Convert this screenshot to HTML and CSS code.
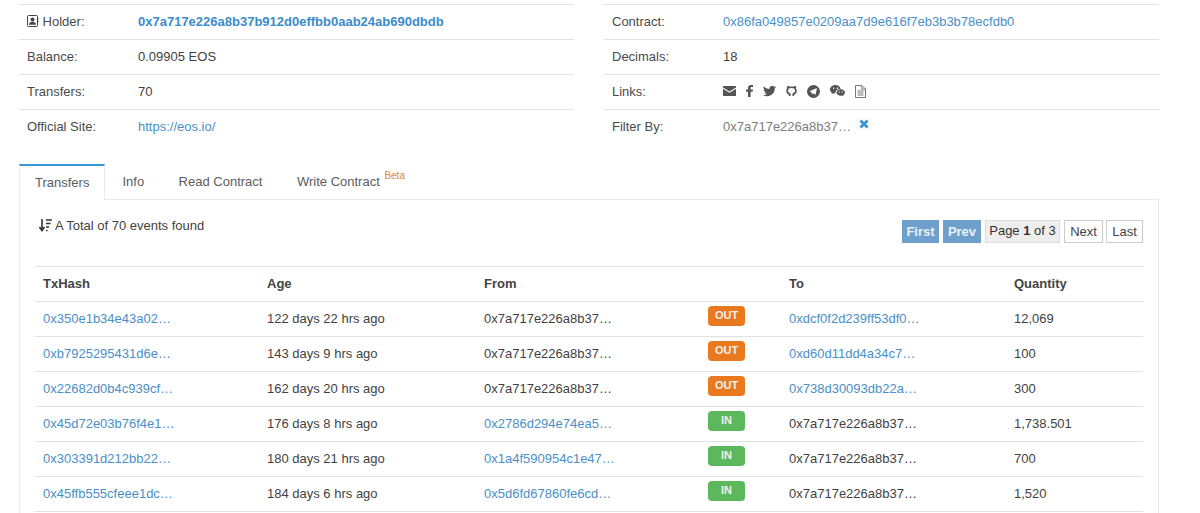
FILE: index.html
```html
<!DOCTYPE html>
<html lang="en">
<head>
<meta charset="utf-8">
<title>Token holder</title>
<link rel="stylesheet" href="styles.css">
</head>
<body>
<section class="summary">
  <div class="col">
    <div class="row"><div class="label"><svg class="ico-holder" viewBox="0 0 12 12"><rect x="0.5" y="0.5" width="10" height="11" rx="1" fill="none" stroke="#444" stroke-width="1"/><circle cx="5.5" cy="4.4" r="2" fill="#444"/><path d="M2 9.8c0-2.2 1.4-3 3.5-3s3.500.8 3.500 3z" fill="#444"/><path d="M11 3v1.500M11 6v1.500" stroke="#444"/></svg> Holder:</div><div class="value"><a class="strong" href="#">0x7a717e226a8b37b912d0effbb0aab24ab690dbdb</a></div></div>
    <div class="row"><div class="label">Balance:</div><div class="value">0.09905 EOS</div></div>
    <div class="row"><div class="label">Transfers:</div><div class="value">70</div></div>
    <div class="row"><div class="label">Official Site:</div><div class="value"><a href="#">https://eos.io/</a></div></div>
  </div>
  <div class="col">
    <div class="row"><div class="label">Contract:</div><div class="value"><a href="#">0x86fa049857e0209aa7d9e616f7eb3b3b78ecfdb0</a></div></div>
    <div class="row"><div class="label">Decimals:</div><div class="value">18</div></div>
    <div class="row"><div class="label">Links:</div><div class="value links">
      <svg class="lnk w13" viewBox="0 0 14 11"><path d="M0 0h14v1.800L7 6 0 1.800z"/><path d="M0 3.200l7 4.200 7-4.200V11H0z"/></svg>
      <svg class="lnk w7" viewBox="0 0 7 12"><path d="M2 12V6.700H0V4.500h2V3C2 1 3.200 0 5 0h2v2.100H5.700c-.9 0-1.100.4-1.100 1.100v1.300H7l-.4 2.200h-2V12z"/></svg>
      <svg class="lnk w13" viewBox="0 0 14 12"><path d="M14 1.600c-.5.300-1 .4-1.600.5.600-.4 1-.9 1.200-1.500-.5.300-1.100.5-1.800.7A2.900 2.900 0 0 0 6.900 3.800C4.500 3.700 2.400 2.600 1 .8.200 2.100.6 3.700 1.900 4.600c-.5 0-.9-.1-1.300-.4 0 1.400 1 2.600 2.300 2.900-.4.100-.9.100-1.300 0 .4 1.200 1.400 2 2.700 2A5.800 5.800 0 0 1 0 10.300 8.200 8.200 0 0 0 12.600 3.400c.6-.5 1-1.100 1.400-1.800z"/></svg>
      <svg class="lnk w11" viewBox="0 0 12 12"><path d="M4 11.500V9.200C2.200 8.900 1.200 7.800 1.200 5.800c0-.9.300-1.600.8-2.200-.2-.6-.2-1.400.1-2.200.8 0 1.500.4 2 .8a6.500 6.500 0 0 1 3.800 0c.5-.4 1.200-.8 2-.8.300.8.300 1.600.1 2.200.5.600.8 1.300.8 2.200 0 2-1 3.100-2.800 3.400v2.300" fill="none" stroke="#555" stroke-width="1.900"/></svg>
      <svg class="lnk w13 tall" viewBox="0 0 13 13"><path fill-rule="evenodd" d="M6.500 0a6.500 6.500 0 1 1 0 13 6.500 6.500 0 0 1 0-13zM2.600 6.300l1.700.7.700 2.300 1.200-1.100 1.900 1.400c.2.100.4 0 .5-.2l1.300-5.900c0-.3-.2-.4-.4-.3z"/></svg>
      <svg class="lnk w15" viewBox="0 0 15 12"><path d="M5.500 0C2.500 0 0 2 0 4.500c0 1.400.8 2.600 2 3.400L1.500 9.300l1.800-1c.6.200 1.200.3 1.900.3a3.600 3.600 0 0 1 .1-1.200c.5-2 2.500-3.500 5-3.500h.4C10.200 1.700 8 0 5.500 0z"/><circle cx="3.700" cy="3.300" r=".7" fill="#fff"/><circle cx="7.300" cy="3.300" r=".7" fill="#fff"/><path d="M15 7.500c0-1.900-1.900-3.300-4.200-3.300S6.500 5.600 6.500 7.500s1.900 3.300 4.300 3.300c.5 0 1-.1 1.400-.2l1.400.9-.4-1.200c1.100-.7 1.800-1.700 1.800-2.800z"/><circle cx="9.200" cy="6.900" r=".6" fill="#fff"/><circle cx="12.200" cy="6.900" r=".6" fill="#fff"/></svg>
      <svg class="lnk doc" viewBox="0 0 11 13"><path d="M.5.500h6.500l3.500 3.500v8.500H.5z" fill="none" stroke="#777"/><path d="M2.500 6h6M2.500 8h6M2.500 10h6M6.800.8V4.200h3.400" fill="none" stroke="#777"/></svg>
    </div></div>
    <div class="row"><div class="label">Filter By:</div><div class="value filter"><span class="muted">0x7a717e226a8b37…</span><span class="clear" aria-label="clear"><svg viewBox="0 0 9 9"><path d="M1.300 1.300l6.400 6.400M7.700 1.300L1.300 7.700" stroke="#3d94d1" stroke-width="2.600"/></svg></span></div></div>
  </div>
</section>

<nav class="tabs">
  <a class="tab active" href="#">Transfers</a>
  <a class="tab" href="#">Info</a>
  <a class="tab" href="#">Read Contract</a>
  <a class="tab" href="#">Write Contract <sup class="beta">Beta</sup></a>
</nav>

<section class="panel">
  <div class="toolbar">
    <div class="total"><svg class="ico-sort" viewBox="0 0 13 13"><path d="M3 0v10M0.500 8L3 11.500 5.500 8" fill="none" stroke="#333" stroke-width="1.600"/><path d="M7 1h6M7 4.500h4.500M7 8h3M7 11.500h1.500" stroke="#333" stroke-width="1.600"/></svg> A Total of 70 events found</div>
    <div class="pager">
      <a class="pg disabled w-first" href="#">First</a>
      <a class="pg disabled w-prev" href="#">Prev</a>
      <span class="pg current">Page <b>1</b> of 3</span>
      <a class="pg w-next" href="#">Next</a>
      <a class="pg w-last" href="#">Last</a>
    </div>
  </div>
  <table class="tx">
    <colgroup><col class="c1"><col class="c2"><col class="c3"><col class="c4"><col class="c5"><col class="c6"></colgroup>
    <thead><tr><th>TxHash</th><th>Age</th><th>From</th><th></th><th>To</th><th>Quantity</th></tr></thead>
    <tbody>
      <tr><td><a href="#">0x350e1b34e43a02…</a></td><td>122 days 22 hrs ago</td><td>0x7a717e226a8b37…</td><td><span class="badge out">OUT</span></td><td><a href="#">0xdcf0f2d239ff53df0…</a></td><td>12,069</td></tr>
      <tr><td><a href="#">0xb7925295431d6e…</a></td><td>143 days 9 hrs ago</td><td>0x7a717e226a8b37…</td><td><span class="badge out">OUT</span></td><td><a href="#">0xd60d11dd4a34c7…</a></td><td>100</td></tr>
      <tr><td><a href="#">0x22682d0b4c939cf…</a></td><td>162 days 20 hrs ago</td><td>0x7a717e226a8b37…</td><td><span class="badge out">OUT</span></td><td><a href="#">0x738d30093db22a…</a></td><td>300</td></tr>
      <tr><td><a href="#">0x45d72e03b76f4e1…</a></td><td>176 days 8 hrs ago</td><td><a href="#">0x2786d294e74ea5…</a></td><td><span class="badge in">IN</span></td><td>0x7a717e226a8b37…</td><td>1,738.501</td></tr>
      <tr><td><a href="#">0x303391d212bb22…</a></td><td>180 days 21 hrs ago</td><td><a href="#">0x1a4f590954c1e47…</a></td><td><span class="badge in">IN</span></td><td>0x7a717e226a8b37…</td><td>700</td></tr>
      <tr><td><a href="#">0x45ffb555cfeee1dc…</a></td><td>184 days 6 hrs ago</td><td><a href="#">0x5d6fd67860fe6cd…</a></td><td><span class="badge in">IN</span></td><td>0x7a717e226a8b37…</td><td>1,520</td></tr>
    </tbody>
  </table>
</section>
</body>
</html>
```
FILE: styles.css
```css
* { box-sizing: border-box; }
html, body { margin: 0; height: 513px; overflow: hidden; background: #fff; }
body { font-family: "Liberation Sans", Arial, sans-serif; font-size: 13px; color: #3f3f3f; line-height: 18px; }
a { color: #4a8fc7; text-decoration: none; }

.summary { display: grid; grid-template-columns: 555px 555px; column-gap: 30px; margin: 4px 0 0 19px; width: 1140px; }
.row { display: flex; height: 35px; border-top: 1px solid #e2e2e2; padding: 8px 0 0 8px; }
.label { width: 111px; flex: none; color: #4a4a4a; }
.ico-holder { width: 12px; height: 12px; vertical-align: -1px; }
.strong { font-weight: 700; color: #3a8ccb; }
.muted { color: #7d7d7d; }
.filter { display: flex; align-items: flex-start; }
.clear { display: block; margin: 1px 0 0 8px; }
.clear svg { width: 10px; height: 10px; display: block; }
.links { display: flex; align-items: flex-start; gap: 10px; height: 18px; padding-top: 2px; }
.lnk { height: 12px; fill: #555; display: block; }
.w13 { width: 13px; }
.w7 { width: 7px; }
.w11 { width: 11px; }
.w15 { width: 15px; }
.tall { height: 13px; }
.doc { width: 11px; height: 13px; }

.tabs { display: flex; margin: 20px 0 0 19px; width: 1140px; height: 36px; border-bottom: 1px solid #eaeaea; }
.tab { color: #5c5c5c; padding: 9px 15px 0; margin-right: 4.5px; height: 36px; }
.tab.active { border-top: 2px solid #3498db; border-left: 1px solid #eaeaea; border-right: 1px solid #eaeaea; background: #fff; height: 36px; padding: 8px 15px 0; margin-right: 2px; }
.beta { color: #e08a2c; font-size: 10px; line-height: 0; vertical-align: 7px; margin-left: 1px; }

.panel { margin-left: 19px; width: 1140px; height: 313px; border-left: 1px solid #eaeaea; border-right: 1px solid #eaeaea; padding: 0 15px; }
.toolbar { display: flex; justify-content: space-between; align-items: flex-start; height: 66px; }
.total { margin: 17px 0 0 4px; }
.ico-sort { width: 13px; height: 13px; vertical-align: -2px; }
.pager { display: flex; gap: 4px; margin-top: 20px; }
.pg { height: 23px; line-height: 21px; padding: 0 4px; border: 1px solid #ccc; color: #444; text-align: center; white-space: nowrap; }
.w-first { width: 37px; padding: 0; }
.w-prev { width: 38px; padding: 0; }
.w-next { width: 39px; padding: 0; margin-right: -1px; }
.w-last { width: 37px; padding: 0; }
.pg.disabled { background: #6f9fcb; border-color: #6f9fcb; color: #eaf2f8; font-weight: 700; }
.pg.current { width: 75px; padding: 0; background: #eee; border-color: #ddd; color: #333; line-height: 19px; }

.tx { width: 1108px; border-collapse: collapse; table-layout: fixed; }
.c1 { width: 224px; } .c2 { width: 217px; } .c3 { width: 224px; } .c4 { width: 81px; } .c5 { width: 225px; } .c6 { width: 137px; }
.tx th, .tx td { height: 35px; padding: 0 8px; text-align: left; white-space: nowrap; border-top: 1px solid #e2e2e2; }
.tx th { font-weight: 700; color: #444; }
.tx tr:last-child td { border-bottom: 1px solid #e2e2e2; }
.badge { display: block; width: 37px; height: 20px; margin: -6px 0 0 0; border-radius: 4px; color: #f0f0f0; font-size: 11px; font-weight: 700; line-height: 18px; text-align: center; }
.out { background: #e9791f; }
.in { background: #5cb85c; }
```
